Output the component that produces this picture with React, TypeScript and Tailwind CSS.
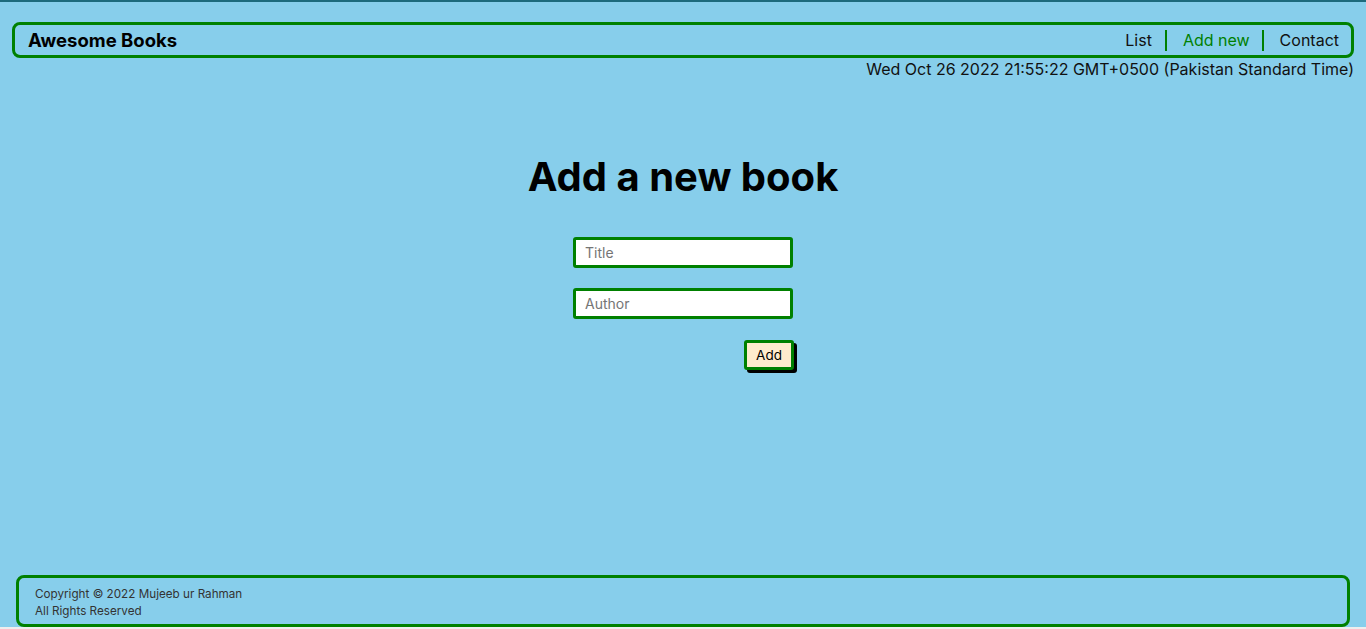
import React from "react";

export default function App() {
  return (
    <div
      className="w-[1366px] h-[629px] flex flex-col bg-[#87ceeb] overflow-hidden"
      style={{ fontFamily: "Inter, 'Noto Sans', sans-serif" }}
    >
      <div className="h-[2px] bg-[#1d6a7c] shrink-0" />
      <div className="flex-1 flex flex-col px-[12px]">
        <header className="mt-[20px] h-[36px] border-[3px] border-[#008000] rounded-[8px] flex items-center justify-between pl-[13px] pr-[12px]">
          <h1 className="text-[18.5px] font-bold text-black leading-none">Awesome Books</h1>
          <nav className="flex items-center text-[16px] leading-none">
            <span className="text-[#111] pr-[13px] border-r-[2px] border-[#008000] h-[21px] flex items-center">List</span>
            <span className="text-[#008000] pl-[16px] pr-[12px] border-r-[2px] border-[#008000] h-[21px] flex items-center">Add new</span>
            <span className="text-[#111] pl-[16px] h-[21px] flex items-center">Contact</span>
          </nav>
        </header>
        <div className="text-right text-[16px] text-[#111] mt-[1px] leading-[20px]">
          Wed Oct 26 2022 21:55:22 GMT+0500 (Pakistan Standard Time)
        </div>
        <main className="flex flex-col items-center mt-[74px]">
          <h2 className="text-[40px] font-bold text-black leading-[48px]">Add a new book</h2>
          <div className="flex flex-col items-end w-[220px] mt-[36px]">
            <input
              placeholder="Title"
              className="w-[220px] h-[31px] bg-white border-[3px] border-[#008000] rounded-[3px] px-[9px] text-[14px] outline-none placeholder:text-[#757575]"
            />
            <input
              placeholder="Author"
              className="w-[220px] h-[31px] mt-[20px] bg-white border-[3px] border-[#008000] rounded-[3px] px-[9px] text-[14px] outline-none placeholder:text-[#757575]"
            />
            <button className="mt-[21px] mr-[-1px] h-[30px] w-[50px] bg-[#ffebcd] border-[3px] border-[#008000] rounded-[3px] text-[13.5px] text-black shadow-[3px_3px_0_#000]">
              Add
            </button>
          </div>
        </main>
        <div className="flex-1" />
        <footer className="mx-[4px] h-[52px] border-[3px] border-[#008000] rounded-[8px] pl-[16px] pt-[3px] flex flex-col justify-center text-[11.7px] text-[#333] leading-[17px]">
          <div>Copyright © 2022 Mujeeb ur Rahman</div>
          <div>All Rights Reserved</div>
        </footer>
      </div>
      <div className="h-[2px] bg-[#eeeeee] shrink-0" />
    </div>
  );
}
